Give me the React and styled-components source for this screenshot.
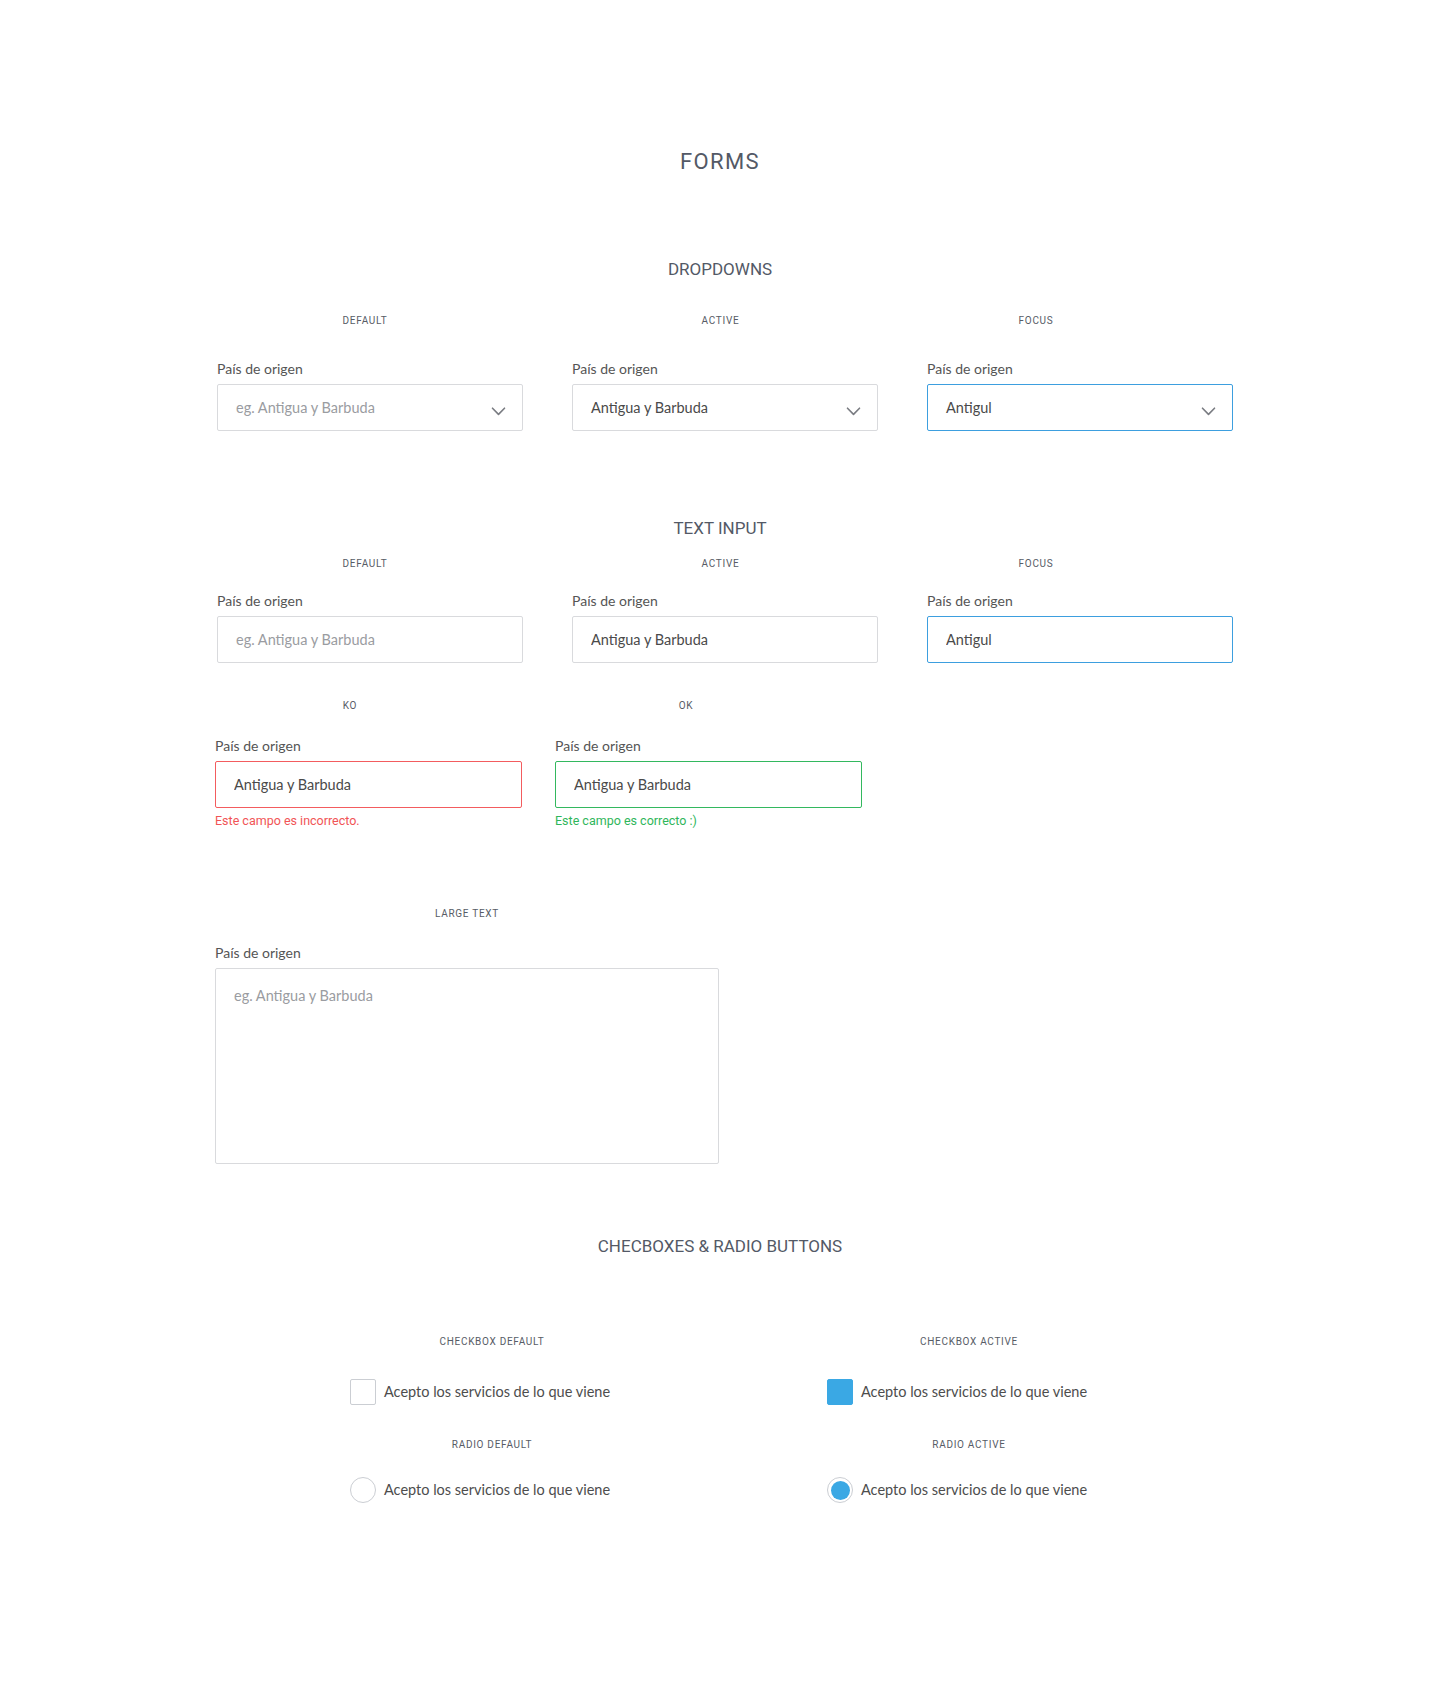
import React from 'react';
import styled, { createGlobalStyle } from 'styled-components';

const GlobalStyle = createGlobalStyle`
    body {
        margin: 0;
        background: #FFFFFF;
        font-family: Lato, "Open Sans", sans-serif;
    }
`

const Page = styled.div`
    width: 1440px;
    min-height: 1702px;
    padding-top: 149px;
    box-sizing: border-box;
`

const Title = styled.h1`
    margin: 0;
    text-align: center;
    font-family: Roboto, "Liberation Sans", sans-serif;
    font-weight: 400;
    font-size: 22px;
    line-height: 26px;
    letter-spacing: 1.4px;
    color: #535966;
`

const SectionTitle = styled.h2`
    margin: ${props => props.top}px 0 0;
    text-align: center;
    font-family: Roboto, "Liberation Sans", sans-serif;
    font-weight: 400;
    font-size: 17px;
    line-height: 20px;
    color: #535966;
`

const Grid = styled.div`
    display: grid;
    grid-template-columns: repeat(${props => props.cols}, ${props => props.colWidth}px);
    column-gap: ${props => props.gap}px;
    margin-top: ${props => props.top}px;
    padding-left: ${props => props.left}px;
`

const Column = styled.div`
    display: flex;
    flex-direction: column;
`

const StateLabel = styled.div`
    font-family: Roboto, "Liberation Sans", sans-serif;
    font-size: 10px;
    line-height: 12px;
    letter-spacing: 0.7px;
    color: #575c66;
    text-align: center;
    padding-right: ${props => props.shift || 0}px;
    margin-top: ${props => props.top || 0}px;
`

const FieldLabel = styled.label`
    display: block;
    margin-top: ${props => props.top}px;
    font-size: 14px;
    line-height: 18px;
    color: #555555;
`

const boxBorder = {
    default: '#d9dadd',
    focus: '#3d9fdf',
    error: '#f35c5e',
    success: '#33b85e',
}

const SelectBox = styled.div`
    margin-top: 6px;
    height: 47px;
    box-sizing: border-box;
    border: 1px solid ${props => boxBorder[props.state]};
    border-radius: 2px;
    display: flex;
    align-items: center;
    justify-content: space-between;
    padding: 0 16px 0 18px;
    font-size: 14.5px;
    color: ${props => props.placeholder ? '#9a9ca1' : '#4a4a4a'};

    svg {
        margin-top: 7px;
    }
`

const TextBox = styled.input`
    display: block;
    margin-top: 6px;
    width: 100%;
    height: 47px;
    box-sizing: border-box;
    border: 1px solid ${props => boxBorder[props.state]};
    border-radius: 2px;
    padding: 0 18px;
    font-family: Lato, "Open Sans", sans-serif;
    font-size: 14.5px;
    color: #4a4a4a;
    background: #FFFFFF;
    outline: none;

    &::placeholder {
        color: #9a9ca1;
    }
`

const TextArea = styled.textarea`
    display: block;
    margin-top: 6px;
    width: 504px;
    height: 196px;
    box-sizing: border-box;
    border: 1px solid #d9dadd;
    border-radius: 2px;
    padding: 17px 18px;
    font-family: Lato, "Open Sans", sans-serif;
    font-size: 14.5px;
    line-height: 20px;
    resize: none;
    outline: none;

    &::placeholder {
        color: #9a9ca1;
    }
`

const Hint = styled.div`
    margin-top: 6px;
    font-family: Roboto, "Liberation Sans", sans-serif;
    font-size: 12.5px;
    line-height: 14px;
    color: ${props => props.ok ? '#2fb65b' : '#f15456'};
`

const ChoiceRow = styled.div`
    display: flex;
    align-items: center;
    gap: 8px;
    margin-top: ${props => props.top}px;
    padding-left: 8px;
    font-size: 14.5px;
    line-height: 26px;
    color: #4d4d4d;
`

const CheckMark = styled.span`
    width: 26px;
    height: 26px;
    box-sizing: border-box;
    border-radius: 2px;
    border: 1px solid ${props => props.checked ? '#3aa8e4' : '#cbced3'};
    background: ${props => props.checked ? '#3aa8e4' : '#FFFFFF'};
    flex-shrink: 0;
`

const RadioMark = styled.span`
    width: 26px;
    height: 26px;
    box-sizing: border-box;
    border-radius: 50%;
    border: 1px solid #cbced3;
    display: flex;
    align-items: center;
    justify-content: center;
    flex-shrink: 0;

    &::after {
        content: '';
        width: 19px;
        height: 19px;
        border-radius: 50%;
        background: ${props => props.checked ? '#3aa8e4' : 'transparent'};
    }
`

const Chevron = () => (
    <svg width="15" height="9" viewBox="0 0 15 9" fill="none">
        <path d="M1.5 1.2L7.5 7.4L13.5 1.2" stroke="#7a7c82" strokeWidth="1.6" strokeLinecap="round" strokeLinejoin="round" />
    </svg>
)

const dropdowns = [
    { name: 'DEFAULT', shift: 10, value: 'eg. Antigua y Barbuda', placeholder: true, state: 'default' },
    { name: 'ACTIVE', shift: 9, value: 'Antigua y Barbuda', state: 'default' },
    { name: 'FOCUS', shift: 88, value: 'Antigul', state: 'focus' },
]

const inputs = [
    { name: 'DEFAULT', shift: 10, placeholder: 'eg. Antigua y Barbuda', state: 'default' },
    { name: 'ACTIVE', shift: 9, value: 'Antigua y Barbuda', state: 'default' },
    { name: 'FOCUS', shift: 88, value: 'Antigul', state: 'focus' },
]

const TEXT = 'Acepto los servicios de lo que viene'

class App extends React.Component {

    renderDropdown (item) {
        return (
            <Column key={item.name}>
                <StateLabel shift={item.shift}>{item.name}</StateLabel>
                <FieldLabel top={33}>País de origen</FieldLabel>
                <SelectBox state={item.state} placeholder={item.placeholder}>
                    <span>{item.value}</span>
                    <Chevron />
                </SelectBox>
            </Column>
        )
    }

    renderInput (item) {
        return (
            <Column key={item.name}>
                <StateLabel shift={item.shift}>{item.name}</StateLabel>
                <FieldLabel top={22}>País de origen</FieldLabel>
                <TextBox state={item.state} placeholder={item.placeholder} value={item.value || ''} readOnly />
            </Column>
        )
    }

    render () {
        return (
            <Page>
                <GlobalStyle />
                <Title>FORMS</Title>

                <SectionTitle top={84}>DROPDOWNS</SectionTitle>
                <Grid cols={3} colWidth={306} gap={49} left={217} top={36}>
                    {dropdowns.map(item => this.renderDropdown(item))}
                </Grid>

                <SectionTitle top={87}>TEXT INPUT</SectionTitle>
                <Grid cols={3} colWidth={306} gap={49} left={217} top={20}>
                    {inputs.map(item => this.renderInput(item))}
                </Grid>

                <Grid cols={2} colWidth={307} gap={33} left={215} top={37}>
                    <Column>
                        <StateLabel shift={37}>KO</StateLabel>
                        <FieldLabel top={25}>País de origen</FieldLabel>
                        <TextBox state="error" value="Antigua y Barbuda" readOnly />
                        <Hint>Este campo es incorrecto.</Hint>
                    </Column>
                    <Column>
                        <StateLabel shift={45}>OK</StateLabel>
                        <FieldLabel top={25}>País de origen</FieldLabel>
                        <TextBox state="success" value="Antigua y Barbuda" readOnly />
                        <Hint ok>Este campo es correcto :)</Hint>
                    </Column>
                </Grid>

                <Grid cols={1} colWidth={504} gap={0} left={215} top={80}>
                    <Column>
                        <StateLabel>LARGE TEXT</StateLabel>
                        <FieldLabel top={24}>País de origen</FieldLabel>
                        <TextArea placeholder="eg. Antigua y Barbuda" readOnly />
                    </Column>
                </Grid>

                <SectionTitle top={72}>CHECBOXES &amp; RADIO BUTTONS</SectionTitle>
                <Grid cols={2} colWidth={300} gap={177} left={342} top={80}>
                    <Column>
                        <StateLabel>CHECKBOX DEFAULT</StateLabel>
                        <ChoiceRow top={31}><CheckMark />{TEXT}</ChoiceRow>
                        <StateLabel top={34}>RADIO DEFAULT</StateLabel>
                        <ChoiceRow top={26}><RadioMark />{TEXT}</ChoiceRow>
                    </Column>
                    <Column>
                        <StateLabel>CHECKBOX ACTIVE</StateLabel>
                        <ChoiceRow top={31}><CheckMark checked />{TEXT}</ChoiceRow>
                        <StateLabel top={34}>RADIO ACTIVE</StateLabel>
                        <ChoiceRow top={26}><RadioMark checked />{TEXT}</ChoiceRow>
                    </Column>
                </Grid>
            </Page>
        )
    }
}

export default App
